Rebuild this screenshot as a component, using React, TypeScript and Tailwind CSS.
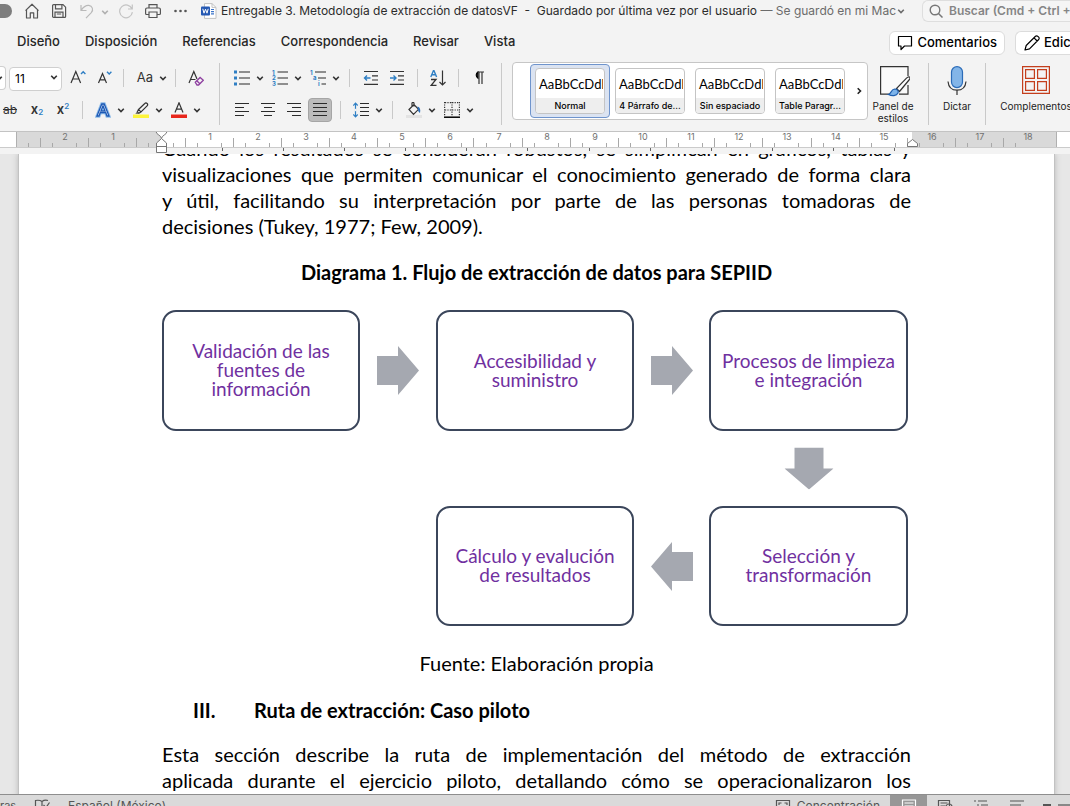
import React from "react";

type Kids = { children?: React.ReactNode };

function Svg({ w = 16, h = 16, className = "", children }: Kids & { w?: number; h?: number; className?: string }) {
  return (
    <svg width={w} height={h} viewBox={`0 0 ${w} ${h}`} fill="none" stroke="currentColor" strokeWidth="1.2" className={`shrink-0 ${className}`} aria-hidden="true">
      {children}
    </svg>
  );
}

function Chevron({ className = "text-[#333]" }: { className?: string }) {
  return (
    <Svg w={8} h={8} className={className}>
      <path d="M1.2 2.7 4 5.5 6.8 2.7" strokeWidth="1.6" />
    </Svg>
  );
}

function Drop({ label, children }: Kids & { label: string }) {
  return (
    <button aria-label={label} className="flex shrink-0 items-center gap-1.5">
      {children}
      <Chevron />
    </button>
  );
}

function Tool({ label, className, children }: Kids & { label: string; className: string }) {
  return (
    <button aria-label={label} className={`flex h-6 shrink-0 items-center justify-center ${className}`}>
      {children}
    </button>
  );
}

function Sep({ className }: { className: string }) {
  return (
    <span className={`flex shrink-0 justify-center ${className}`}>
      <span className="h-[18px] w-px bg-[#c9c9c9]" />
    </span>
  );
}

function Divider() {
  return <span className="mt-px h-[62px] w-px shrink-0 bg-[#c9c9c9]" />;
}

function TitleBar() {
  return (
    <header className="flex h-6 shrink-0 items-center overflow-hidden text-[12px] text-[#555]">
      <span className="mb-0.5 mr-3 h-[14px] w-3 shrink-0 rounded-r-full bg-[#7d7d7d]" />
      <button aria-label="Inicio" className="mr-[11px] pb-0.5">
        <Svg><path d="M1.500 7.600 8 1.200l6.500 6.400M2.500 6.800v8.200h3.800v-5.200h3.400v5.200h3.800V6.800" strokeLinejoin="round" /></Svg>
      </button>
      <button aria-label="Guardar" className="mr-3 pb-0.5">
        <Svg><path d="M1.600 2.600a1 1 0 0 1 1-1h9.400l2.600 2.600v9.200a1 1 0 0 1-1 1H2.600a1 1 0 0 1-1-1zM4.500 1.800v4h6.400v-4M4 14.200V9.200h8v5M5.800 11h4.400" /></Svg>
      </button>
      <button aria-label="Deshacer" className="mr-1.5 pb-0.5 text-[#b9b9b9]">
        <Svg><path d="M2 2v5.500h5.500M2.300 7.200C4.500 3.800 7 2.200 9.800 2.400c3.600.4 5 4.400 2.500 7.200L7 15.200" /></Svg>
      </button>
      <Chevron className="mr-[9px] text-[#b0b0b0]" />
      <button aria-label="Rehacer" className="mr-[11px] pb-0.5 text-[#c4c4c4]">
        <Svg><path d="M14 6A6.400 6.400 0 1 0 14.400 9.200M14.300 1.500V6H10" /></Svg>
      </button>
      <button aria-label="Imprimir" className="mr-3 pb-0.5">
        <Svg><path d="M4 5V1.600h8V5M3.800 11.500H1.600a1 1 0 0 1-1-1V6.500A1.500 1.500 0 0 1 2 5h12a1.500 1.500 0 0 1 1.400 1.500v4a1 1 0 0 1-1 1h-2.200M4 9h8v5.500H4z" /></Svg>
      </button>
      <button aria-label="Más" className="mr-3 pb-0.5">
        <Svg><g fill="currentColor" stroke="none"><circle cx="2.500" cy="8" r="1.300" /><circle cx="7.500" cy="8" r="1.300" /><circle cx="12.500" cy="8" r="1.300" /></g></Svg>
      </button>
      <Svg className="mb-0.5 mr-1">
        <path d="M3.500.6h7.500l4 3.800v11H3.500z" fill="#fff" stroke="#c2c2c2" strokeWidth="1" />
        <path d="M11 .6v3.800h4" stroke="#c2c2c2" strokeWidth="1" />
        <path d="M10 6.500h3M10 8.700h3M10 10.900h3" stroke="#3b74c9" />
        <rect x="0" y="3.500" width="9" height="9" rx="1" fill="#2458b3" stroke="none" />
        <path d="m1.800 5.800 1.200 4.400 1.500-4 1.500 4 1.200-4.400" stroke="#fff" strokeWidth="1" />
      </Svg>
      <h1 className="shrink-0 whitespace-pre pb-0.5 text-[#2b2b2b]">Entregable 3. Metodología de extracción de datosVF  -  Guardado por última vez por el usuario</h1>
      <span className="shrink-0 whitespace-pre pb-0.5 text-[#6b6b6b]"> — Se guardó en mi Mac</span>
      <Chevron className="mb-0.5 ml-px text-[#6b6b6b]" />
      <label className="ml-auto flex h-[22px] w-[148px] shrink-0 items-center gap-1.5 self-start rounded-l-md border border-r-0 border-[#dedede] bg-[#f5f5f5] pl-1.5 text-[#777]">
        <Svg w={14} h={14} className="text-[#777]"><circle cx="6" cy="6" r="4.800" strokeWidth="1.400" /><path d="m9.500 9.500 4 4" strokeWidth="1.500" /></Svg>
        <input aria-label="Buscar" placeholder="Buscar (Cmd + Ctrl + U)" className="w-full min-w-0 bg-transparent font-semibold placeholder:text-[#858585]" />
      </label>
    </header>
  );
}

function Tabs() {
  return (
    <nav className="flex h-[38px] shrink-0 items-center overflow-hidden pl-[17px] text-[13px] font-medium text-[#262626]">
      <div className="flex items-center gap-[25px] pb-0.5 pr-2">
        {["Diseño", "Disposición", "Referencias", "Correspondencia", "Revisar", "Vista"].map((t) => (
          <a key={t} href="#" className="shrink-0">{t}</a>
        ))}
      </div>
      <button className="ml-auto flex h-6 shrink-0 items-center gap-1 rounded-md border border-[#dcdcdc] bg-white px-[7px] text-black">
        <Svg><path d="M1.500 1.500h13v9.500H7.500L4 14.500V11H1.500z" strokeLinejoin="round" /></Svg>
        Comentarios
      </button>
      <button className="ml-[10px] flex h-6 w-[55px] shrink-0 items-center gap-1 overflow-hidden rounded-l-md border border-r-0 border-[#dcdcdc] bg-white pl-2 text-black">
        <Svg><path d="M1 15l1.200-4.500L11.500 1.300a1.600 1.600 0 0 1 2.300 0l.9.900a1.600 1.600 0 0 1 0 2.300L5.500 13.800zM10 2.800 13.200 6" strokeLinejoin="round" /></Svg>
        Edición
      </button>
    </nav>
  );
}

function Align({ d }: { d: string }) {
  return <Svg><path d={d} stroke="#2b2b2b" /></Svg>;
}

function FontGroup() {
  return (
    <div className="w-[219px] shrink-0">
      <div className="flex h-8 items-center">
        <span className="flex h-6 w-1.5 shrink-0 items-center overflow-hidden rounded-r border border-l-0 border-[#cfcfcf] bg-white"><Chevron className="-ml-[5px] text-[#333]" /></span>
        <div className="relative ml-[3px] w-[53px] shrink-0">
          <select aria-label="Tamaño de fuente" className="h-6 w-full appearance-none rounded border border-[#cfcfcf] bg-white pl-[5px] text-[12px] text-black">
            <option>11</option>
          </select>
          <span className="pointer-events-none absolute right-1 top-2"><Chevron /></span>
        </div>
        <Tool label="Aumentar fuente" className="w-[31px]">
          <Svg><path d="M1 13 5.800 1.500 10.600 13M2.800 9h6" stroke="#333" /><path d="m11 4 2.200-2.200L15.400 4" stroke="#2f7fc4" strokeWidth="1.400" /></Svg>
        </Tool>
        <Tool label="Reducir fuente" className="w-[23px]">
          <Svg><path d="M1.500 13 5.500 3.500l4 9.500M3 9.800h5" stroke="#333" /><path d="m10 1.800 2.200 2.200 2.200-2.200" stroke="#2f7fc4" strokeWidth="1.400" /></Svg>
        </Tool>
        <Sep className="w-[15px]" />
        <button aria-label="Cambiar mayúsculas" className="flex w-[38px] shrink-0 items-center justify-center gap-1.5 pl-1 text-[13px] text-[#333]">Aa<Chevron /></button>
        <Sep className="w-3" />
        <Tool label="Borrar formato" className="w-[30px]">
          <Svg><path d="M1 13 5.800 1.500 9 9M2.800 9.500h4.700" stroke="#333" /><path d="m7.300 12.300 4.800-4.800 3.200 2.700-4.700 4.800H9zM8.800 10.700l3 3" stroke="#8e3fa0" strokeWidth="1.300" /></Svg>
        </Tool>
      </div>
      <div className="flex h-8 items-center">
        <Tool label="Tachado" className="w-[20px] text-[12px] text-[#333] line-through">ab</Tool>
        <Tool label="Subíndice" className="w-[34px] text-[13px] font-semibold text-[#333]">x<sub className="text-[8px] text-[#2f7fc4]">2</sub></Tool>
        <Tool label="Superíndice" className="w-[22px] pr-1 text-[13px] font-semibold text-[#333]">x<sup className="text-[8px] text-[#2f7fc4]">2</sup></Tool>
        <Sep className="w-3" />
        <div className="flex gap-2 pl-[7px]">
          <Drop label="Efectos de texto">
            <Svg><path d="M1.500 14.500 6.500 1.500h3l5 13h-2.800l-1.300-3.500H5.600l-1.300 3.500zM6.400 8.600h3.200L8 4.200z" fill="#cfe2f7" stroke="#8fbce8" strokeWidth="2.400" /><path d="M2 14 6.800 2h2.400L14 14h-2l-1.300-3.500H5.300L4 14zM6 8.800h4L8 3.800z" fill="#fff" stroke="#1d59b5" strokeWidth="1.300" /></Svg>
          </Drop>
          <Drop label="Resaltado">
            <Svg><path d="M0 12.500h16v3.500H0z" fill="#fdf43b" stroke="none" /><path d="m5.500 7.500 6.300-6a1.600 1.600 0 0 1 2.300 2.300L8 10zM5.500 7.500 4.300 9.800 5.800 11.300 8 10" stroke="#333" /><path d="m4.300 9.400-2 2.400H5l.9-.8z" fill="#555" stroke="none" /></Svg>
          </Drop>
          <Drop label="Color de fuente">
            <Svg><path d="M0 12.500h16v3.500H0z" fill="#e8261c" stroke="none" /><path d="M4 10.500 8 .8l4 9.700M5.400 7.200h5.200" stroke="#333" /></Svg>
          </Drop>
        </div>
      </div>
    </div>
  );
}

function ParagraphGroup() {
  return (
    <div className="w-[281px] shrink-0">
      <div className="flex h-8 items-center">
        <div className="flex gap-2 pl-3.5">
          <Drop label="Viñetas">
            <Svg><path d="M0 .5h3v3H0zM0 6.500h3v3H0zM0 12.500h3v3H0z" fill="#2f7fc4" stroke="none" /><path d="M5 2h11M5 8h11M5 14h11" stroke="#2b2b2b" /></Svg>
          </Drop>
          <Drop label="Numeración">
            <Svg><g className="font-bold" fontSize="6" fill="#2f7fc4" stroke="none"><text x="0" y="4.500">1</text><text x="0" y="10.200">2</text><text x="0" y="16">3</text></g><path d="M5.500 2H16M5.500 8H16M5.500 14H16" stroke="#2b2b2b" /></Svg>
          </Drop>
          <Drop label="Lista multinivel">
            <Svg><g className="font-bold" fontSize="6" fill="#2f7fc4" stroke="none"><text x="0" y="4.500">1</text><text x="3" y="10">a</text><text x="8" y="16">i</text></g><path d="M5 2h11M8 8h8M11.500 14H16" stroke="#2b2b2b" /></Svg>
          </Drop>
        </div>
        <Sep className="w-[18px]" />
        <Tool label="Reducir sangría" className="w-[26px]">
          <Svg><path d="M1 1.500h14M9 5.800h6M9 10h6M1 14.300h14" stroke="#333" /><path d="M7.500 8H1.500M4 5.500 1.500 8 4 10.500" stroke="#2f7fc4" strokeWidth="1.400" /></Svg>
        </Tool>
        <Tool label="Aumentar sangría" className="w-[26px]">
          <Svg><path d="M1 1.500h14M9 5.800h6M9 10h6M1 14.300h14" stroke="#333" /><path d="M1 8h6M4.500 5.500 7 8l-2.500 2.500" stroke="#2f7fc4" strokeWidth="1.400" /></Svg>
        </Tool>
        <Sep className="w-3.5" />
        <Tool label="Ordenar" className="w-7">
          <Svg><path d="M.8 7 3.700 0l2.900 7M1.800 4.800h3.800" stroke="#2f7fc4" strokeWidth="1.400" /><path d="M1 9.500h5L1 15.500h5.500" stroke="#333" strokeWidth="1.300" /><path d="M12.500.5v14.500M9.500 12l3 3 3-3" stroke="#333" /></Svg>
        </Tool>
        <Sep className="w-3" />
        <Tool label="Marcas de párrafo" className="w-[30px]">
          <Svg><path d="M7 8.200A3.600 3.600 0 0 1 7 2z" fill="#333" /><path d="M6.500 2H13M8 2v12M11 2v12" stroke="#333" /></Svg>
        </Tool>
      </div>
      <div className="flex h-8 items-center">
        <div className="flex pl-[9px]">
          <Tool label="Alinear a la izquierda" className="w-[26px]"><Align d="M1 1.500h14M1 5.500h9M1 9.500h14M1 13.500h9" /></Tool>
          <Tool label="Centrar" className="w-[26px]"><Align d="M1 1.500h14M4 5.500h8M1 9.500h14M4 13.500h8" /></Tool>
          <Tool label="Alinear a la derecha" className="w-[26px]"><Align d="M1 1.500h14M6 5.500h9M1 9.500h14M6 13.500h9" /></Tool>
          <Tool label="Justificar" className="mx-px w-6 rounded-sm border border-[#a5a5a5] bg-[#bcbcbc]"><Align d="M1 1.500h14M1 5.500h14M1 9.500h14M1 13.500h14" /></Tool>
        </div>
        <Sep className="w-3.5" />
        <span className="flex pl-1.5">
          <Drop label="Interlineado">
            <Svg><path d="M2.500 1v14M.3 3.500l2.200-2.300 2.200 2.300M.3 12.500l2.200 2.300 2.200-2.300" stroke="#2f7fc4" /><path d="M2.500 6.800v2.400" stroke="#f3f3f3" strokeWidth="2" /><path d="M7 1.500h9M7 5.500h9M7 9.500h9M7 13.500h9" stroke="#2b2b2b" /></Svg>
          </Drop>
        </span>
        <Sep className="w-[18px]" />
        <div className="flex gap-2 pl-[5px]">
          <Drop label="Sombreado">
            <Svg><path d="M0 13h16v3H0z" fill="#e3e3e3" stroke="none" /><path d="M3 7.500 8 2.500l4.500 4.800-5 5zM8 4.500V1.200a1 1 0 0 0-2 .5v2.600" stroke="#333" /><path d="M11.500 4.500c2.500.6 3.300 3 2.500 6.500-1.300-1-2-2-2.200-4" fill="#2f6fb8" stroke="none" /></Svg>
          </Drop>
          <Drop label="Bordes">
            <Svg><path d="M.6 0v14M15.400 0v14M8 0v14M1 .6h14M1 8h14" stroke="#333" strokeDasharray="1.200 1.200" /><path d="M0 15.200h16" stroke="#000" strokeWidth="1.500" /></Svg>
          </Drop>
        </div>
      </div>
    </div>
  );
}

function StyleCard({ name, active = false }: { name: string; active?: boolean }) {
  return (
    <button className={`flex h-[54px] w-20 shrink-0 items-center justify-center rounded-sm border ${active ? "border-[#6f94cc] bg-[#dbe3f1]" : "border-transparent"}`}>
      <span className="flex h-[46px] w-[70px] flex-col overflow-hidden rounded border border-[#c4c4c4] bg-white">
        <span className="mr-px flex h-[30px] items-center overflow-hidden whitespace-nowrap pl-[3px] pt-0.5 font-['Lato'] text-[13px] text-black">AaBbCcDdEe</span>
        <span className="flex h-[15px] items-center justify-center whitespace-nowrap bg-[#eeeeee] text-[9px] font-medium text-black">{name}</span>
      </span>
    </button>
  );
}

function Ribbon() {
  return (
    <section className="flex h-[70px] shrink-0 items-start overflow-hidden border-b border-[#c3c3c3]">
      <FontGroup />
      <Divider />
      <ParagraphGroup />
      <Divider />
      <div className="ml-2.5 flex h-[58px] w-[356px] shrink-0 items-center rounded-sm border border-[#c6c6c6] bg-white pl-[17px]">
        <StyleCard name="Normal" active />
        <StyleCard name="4 Párrafo de..." />
        <StyleCard name="Sin espaciado" />
        <StyleCard name="Table Paragr..." />
        <button aria-label="Más estilos" className="ml-[5px]"><Chevron className="-rotate-90 text-[#222]" /></button>
      </div>
      <button className="flex w-[60px] shrink-0 flex-col items-center pr-2.5 text-[10px] leading-3 text-[#222]">
        <Svg w={30} h={32} className="mb-0.5 ml-1 mt-1">
          <path d="M28 10V.6H.6v27.600H11M28 19v9.200h-9" fill="#fafafa" stroke="#333" />
          <path d="M29.500 11c-1-.6-2 .2-3 1.200L16.500 22.500l3 3L29 14c1-1.200 1.300-2.400.5-3z" fill="#fff" stroke="#333" />
          <path d="M8.500 28.500c2.500-.5 2.500-5 6-5.500 2.800 0 4.500 2 3.500 4-1.500 3-6 3.300-9.500 1.500z" fill="#7db4ea" stroke="#1f5fae" />
        </Svg>
        Panel de estilos
      </button>
      <Divider />
      <button className="flex w-14 shrink-0 flex-col items-center text-[10px] leading-3 text-[#222]">
        <Svg w={20} h={32} className="mb-0.5 mt-1">
          <rect x="4.500" y=".6" width="11" height="21" rx="5.500" fill="#83b5e8" stroke="#2c6cb8" />
          <path d="M1 15.500c.5 5.500 4 8.700 9 8.700s8.500-3.200 9-8.700M10 24.500V29" stroke="#333" />
        </Svg>
        Dictar
      </button>
      <Divider />
      <button className="ml-[11px] flex w-[78px] shrink-0 flex-col items-center text-[10px] leading-3 text-[#222]">
        <Svg w={28} h={32} className="mb-0.5 mt-1 text-[#c43e1c]">
          <path d="M.6.600h26.800v26.800H.6zM3.600 3.600h8.800v8.800H3.600zM15.600 3.600h8.800v8.800h-8.800zM3.600 15.600h8.800v8.800H3.600zM15.600 15.600h8.800v8.800h-8.800z" />
        </Svg>
        Complementos
      </button>
    </section>
  );
}

const CM = 48.15;
const ZERO = 161.5;

function Ruler() {
  const quarters = Array.from({ length: 84 }, (_, i) => i - 11).filter((q) => q % 4 !== 0 && q < 75);
  const numbers = [-2, -1, ...Array.from({ length: 18 }, (_, i) => i + 1)];
  const tabs = Array.from({ length: 12 }, (_, i) => Math.round(ZERO + (i + 1) * CM * 1.27));
  return (
    <div className="h-[22px] shrink-0 overflow-hidden bg-[#f3f3f3]">
      <svg width="100%" height="22" aria-label="Regla" role="img">
        <rect width="100%" height="15" fill="#fff" />
        <rect x="16" width="145" height="15" fill="#d9d9d9" />
        <rect x="912" width="144" height="15" fill="#d9d9d9" />
        <path d="M0 15.500H1070" stroke="#cbcbcb" />
        <path d="M16.500 0v15M1056.500 0v15" stroke="#b0b0b0" />
        {quarters.map((q) => {
          const x = Math.round(ZERO + (q * CM) / 4) - 0.5;
          return <path key={q} d={`M${x} ${q % 2 === 0 ? 6 : 11}V15`} stroke="#a8a8a8" />;
        })}
        {numbers.map((n) => (
          <text key={n} x={Math.round(ZERO + n * CM)} y="8" textAnchor="middle" fontSize="9" fill="#707070">{Math.abs(n)}</text>
        ))}
        {tabs.map((x) => <path key={x} d={`M${x - 0.5} 16v3`} stroke="#666" />)}
        <path d="M156-.5c0 3 5.500 4 5.500 7 0-3 5.500-4 5.500-7" fill="#fff" stroke="#777" />
        <path d="M161.500 6.500l5 4.500v9.500h-10V11zM156.500 14.500h10" fill="#fff" stroke="#777" />
        <path d="M912.500 7.500l5 4v3h-10v-3z" fill="#fff" stroke="#777" />
      </svg>
    </div>
  );
}

function Justified({ children }: Kids) {
  return <span className="block whitespace-nowrap [text-align-last:justify]">{children}</span>;
}

function Step({ children }: Kids) {
  return (
    <div className="flex items-center justify-center whitespace-nowrap rounded-[14px] border-2 border-[#3b465b] pb-0.5 text-center text-[19px] leading-[19px] text-[#7030a0]">
      <p>{children}</p>
    </div>
  );
}

function Arrow({ className = "" }: { className?: string }) {
  return (
    <svg width="42" height="49" viewBox="0 0 42 49" className={`self-center justify-self-center ${className}`} aria-hidden="true">
      <path d="M0 10h21V0l21 24.500L21 49V39H0z" fill="#a5a8b0" />
    </svg>
  );
}

function Page() {
  return (
    <main className="flex min-h-0 flex-1 overflow-hidden bg-[#e7e7e7] pl-[18px] pr-[15px] font-['Lato',sans-serif] text-[20px] leading-[26px] text-black">
      <article className="h-[700px] w-full border-x border-[#c2c2c2] bg-white pl-[143px] pr-[143px] shadow-[0_0_6px_#b8b8b8]">
        <p className="-mt-[19px]">
          <Justified>Cuando los resultados se consideran robustos, se simplifican en gráficos, tablas y</Justified>
          <Justified>visualizaciones que permiten comunicar el conocimiento generado de forma clara</Justified>
          <Justified>y útil, facilitando su interpretación por parte de las personas tomadoras de</Justified>
          <span className="block">decisiones (Tukey, 1977; Few, 2009).</span>
        </p>
        <h2 className="mt-5 whitespace-nowrap text-center text-[20px] font-bold">Diagrama 1. Flujo de extracción de datos para SEPIID</h2>
        <div className="mr-[3px] mt-[25px] grid grid-cols-[198fr_76fr_198fr_75fr_199fr] grid-rows-[121px_75px_120px]">
          <Step>Validación de las<br />fuentes de<br />información</Step>
          <Arrow />
          <Step>Accesibilidad y<br />suministro</Step>
          <Arrow />
          <Step>Procesos de limpieza<br />e integración</Step>
          <Arrow className="col-start-5 rotate-90" />
          <div className="col-start-3 row-start-3 grid"><Step>Cálculo y evalución<br />de resultados</Step></div>
          <Arrow className="col-start-4 row-start-3 rotate-180" />
          <div className="col-start-5 row-start-3 grid"><Step>Selección y<br />transformación</Step></div>
        </div>
        <p className="mt-6 text-center">Fuente: Elaboración propia</p>
        <h2 className="mt-[21px] flex pl-[31px] text-[20px] font-bold"><span className="w-[61px]">III.</span>Ruta de extracción: Caso piloto</h2>
        <p className="mt-[18px]">
          <Justified>Esta sección describe la ruta de implementación del método de extracción</Justified>
          <Justified>aplicada durante el ejercicio piloto, detallando cómo se operacionalizaron los</Justified>
        </p>
      </article>
    </main>
  );
}

function StatusBar() {
  return (
    <footer className="h-3 shrink-0 overflow-hidden border-t border-[#8e8e8e] bg-[#dadada] text-[11px] text-[#555]">
      <div className="flex h-[22px] items-center">
        <span className="w-[18px]">ras</span>
        <button aria-label="Revisión ortográfica" className="ml-4 mr-[18px]">
          <Svg><path d="M8 3.500C6 2 4 2 1.500 2.500v10C4 12 6 12 8 13.500M8 3.500C10 2 12 2 14 2.500M8 3.500v10M9.500 7l2.500 2.500L15.500 4.500" /></Svg>
        </button>
        <span className="text-[12px]">Español (México)</span>
        <button className="ml-auto flex items-center gap-1.5 text-[12px]">
          <Svg><path d="M1.500 2.500h13v11h-13zM4 7V5h2.500M12 7V5H9.500" /></Svg>
          Concentración
        </button>
        <button aria-label="Diseño de impresión" className="ml-2.5 flex h-[22px] w-[37px] items-center justify-center bg-[#979797] text-white">
          <Svg><path d="M1.500 2h13v13h-13zM3.500 5h9M3.500 8h9M3.500 11h9" /></Svg>
        </button>
        <button aria-label="Diseño web" className="ml-2.5"><Svg><path d="M1.500 2.500h11v11h-11zM3.500 5h7M3.500 8h5" /><circle cx="12" cy="9" r="3" /></Svg></button>
        <button aria-label="Esquema" className="ml-5"><Svg><path d="M1 3h2M5 3h9M4 7h2M8 7h7M4 11h2M8 11h7" /></Svg></button>
        <button aria-label="Borrador" className="ml-5"><Svg><path d="M1 3h14M1 7h11M1 11h14" /></Svg></button>
        <button aria-label="Alejar" className="ml-[18px] h-1 w-2 bg-[#555]" />
        <span className="ml-[7px] h-1 w-3 bg-[#888]" />
      </div>
    </footer>
  );
}

export default function App() {
  return (
    <div className="flex h-screen flex-col overflow-hidden bg-[#f3f3f3] font-['Inter',sans-serif]">
      <TitleBar />
      <Tabs />
      <Ribbon />
      <Ruler />
      <Page />
      <StatusBar />
    </div>
  );
}
